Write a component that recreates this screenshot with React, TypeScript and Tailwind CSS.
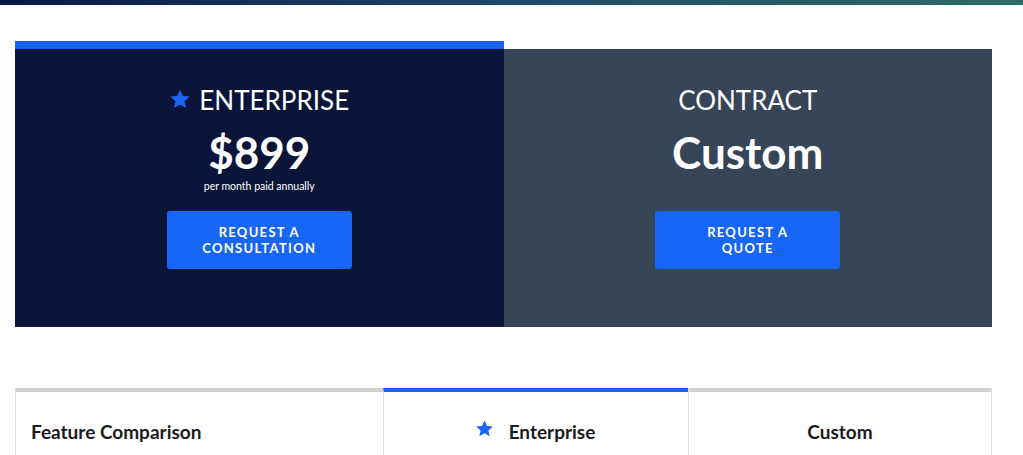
import React from 'react';

const Star = ({ className }: { className?: string }) => (
    <svg className={className} viewBox="0 0 24 24" fill="currentColor">
        <path d="M12 1.8l3.1 6.9 7.4.7-5.6 5 1.7 7.4L12 17.9l-6.6 3.9 1.7-7.4-5.6-5 7.4-.7z" />
    </svg>
);

const PlanCard = ({ title, price, note, cta, featured }: {
    title: string;
    price: string;
    note?: string;
    cta: [string, string];
    featured?: boolean;
}) => (
    <div className="flex flex-col">
        <div className={featured ? 'h-2 bg-[#1662f2]' : 'h-2'} />
        <div className={`h-[278px] flex flex-col items-center pt-[37px] ${featured ? 'bg-[#0b1539]' : 'bg-[#374558]'}`}>
            <div className="flex items-center gap-[8px] h-[28px]">
                {featured && <Star className="w-[22px] h-[22px] text-[#1a64f4] -mt-[3px]" />}
                <span className="text-[26px] leading-none text-white">{title}</span>
            </div>
            <div className="text-[44px] font-bold leading-none text-white mt-[16px]">{price}</div>
            <div className="h-[13px] mt-[6px] text-[10.5px] leading-[13px] text-white">{note}</div>
            <button className="mt-[18px] w-[185px] h-[58px] rounded-[3px] bg-[#1766f5] text-white text-[13px] font-bold tracking-[0.1em] leading-[16px] uppercase">
                {cta[0]}<br />{cta[1]}
            </button>
        </div>
    </div>
);

export default function App() {
    return (
        <div className="min-h-[455px] bg-white font-['Lato','Liberation_Sans',sans-serif] overflow-hidden">
            <div className="h-[5px] bg-gradient-to-r from-[#0a1744] via-[#1f4a68] to-[#2d6d64]" />

            <div className="ml-[15px] w-[977px] mt-[36px] grid grid-cols-2">
                <PlanCard
                    title="ENTERPRISE"
                    price="$899"
                    note="per month paid annually"
                    cta={['Request a', 'Consultation']}
                    featured
                />
                <PlanCard
                    title="CONTRACT"
                    price="Custom"
                    cta={['Request a', 'Quote']}
                />
            </div>

            <div className="ml-[15px] w-[977px] mt-[61px] grid grid-cols-[368px_305px_304px]">
                <div className="border-t-4 border-[#d1d1d0] border-l border-l-[#e3e3e3] h-[70px] flex items-center pl-[15px] pt-[14px]">
                    <span className="text-[19px] font-bold text-[#1b1b1f]">Feature Comparison</span>
                </div>
                <div className="border-t-4 border-[#1a63e8] border-l border-l-[#e3e3e3] h-[70px] flex items-center justify-center gap-[15px] pr-[2px] pt-[14px]">
                    <Star className="w-[19px] h-[19px] text-[#1a64f4] -mt-[8px]" />
                    <span className="text-[19px] font-bold text-[#1b1b1f]">Enterprise</span>
                </div>
                <div className="border-t-4 border-[#d1d1d0] border-x border-x-[#e3e3e3] h-[70px] flex items-center justify-center pt-[14px]">
                    <span className="text-[19px] font-bold text-[#1b1b1f]">Custom</span>
                </div>
            </div>
        </div>
    );
}
